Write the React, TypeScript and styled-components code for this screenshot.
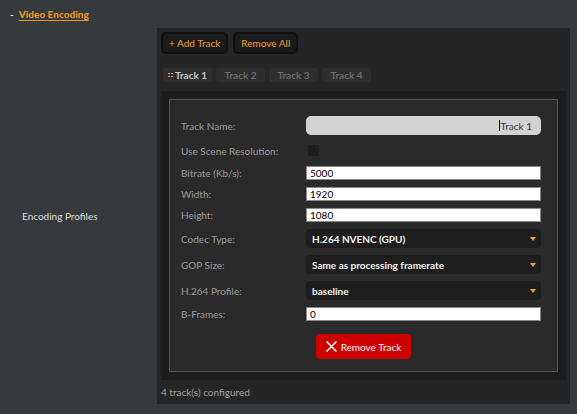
import React from 'react';
import styled, { createGlobalStyle } from 'styled-components';

const GlobalStyle = createGlobalStyle`
  body {
    margin: 0;
    background: #363a3d;
    font-family: Lato, "Open Sans", sans-serif;
    font-size: 10px;
  }
  * { box-sizing: border-box; }
`;

const Page = styled.div`
  width: 577px;
  height: 414px;
  padding-bottom: 10px;
`;

const SectionHeader = styled.div`
  height: 28px;
  display: flex;
  align-items: center;
  gap: 5px;
  padding-left: 10px;
`;

const Dash = styled.span`
  color: #e8e8e8;
  font-size: 10px;
  font-weight: 700;
`;

const SectionLink = styled.a`
  color: #e9952a;
  font-weight: 900;
  font-size: 10px;
  text-decoration: underline;
  text-underline-offset: 2px;
`;

const SettingRow = styled.div`
  display: grid;
  grid-template-columns: 157px 1fr;
  padding-right: 7px;
`;

const SettingLabel = styled.div`
  align-self: center;
  padding-left: 22px;
  color: #dedede;
`;

const Panel = styled.div`
  background: #252525;
  padding: 4px 4px 0;
`;

const Toolbar = styled.div`
  display: flex;
  gap: 5px;
`;

const ToolButton = styled.button`
  height: 22px;
  padding: 0 6px;
  background: #1b1b1b;
  border: 2px solid #111;
  border-radius: 5px;
  color: #f0a030;
  font-family: inherit;
  font-size: 10px;
`;

const TabBar = styled.div`
  display: flex;
  gap: 4px;
  margin-top: 14px;
  padding-left: 2px;
`;

const Tab = styled.div<{ $active?: boolean }>`
  width: 49px;
  height: 14px;
  display: flex;
  align-items: center;
  justify-content: center;
  gap: 2px;
  background: #2e2e2e;
  border-radius: 3px;
  font-weight: 700;
  color: ${p => (p.$active ? '#c8c8c8' : '#6b6b6b')};
`;

const Stage = styled.div`
  margin-top: 9px;
  background: #1c1c1c;
  padding: 8px;
`;

const Card = styled.div`
  border: 1px solid #555;
  background: #2a2a2a;
  padding: 16px 16px 12px 11px;
`;

const Form = styled.div`
  display: flex;
  flex-direction: column;
  gap: 7px;
`;

const Field = styled.div<{ $h: number }>`
  display: grid;
  grid-template-columns: 125px 1fr;
  align-items: center;
  height: ${p => p.$h}px;
  color: #9c9c9c;
`;

const NameInput = styled.div`
  height: 19px;
  background: #d3d3d3;
  border-radius: 5px;
  display: flex;
  align-items: center;
  justify-content: flex-end;
  padding-right: 9px;
  color: #333;
`;

const Caret = styled.span`
  width: 1px;
  height: 11px;
  background: #111;
`;

const CheckBox = styled.div`
  width: 11px;
  height: 11px;
  margin-left: 2px;
  background: #1e1e1e;
  border-radius: 2px;
`;

const TextInput = styled.div`
  height: 14px;
  background: #fff;
  border: 1px solid #8a8a8a;
  padding: 0 3px;
  color: #000;
  display: flex;
  align-items: center;
`;

const Select = styled.div`
  height: 19px;
  background: #1e1e1e;
  border-radius: 4px;
  display: flex;
  align-items: center;
  justify-content: space-between;
  padding: 0 5px 0 6px;
  color: #f2f2f2;
  font-weight: 700;
`;

const Arrow = styled.span`
  width: 0;
  height: 0;
  border-left: 3px solid transparent;
  border-right: 3px solid transparent;
  border-top: 4px solid #f0a030;
`;

const RemoveButton = styled.button`
  grid-column: 2;
  width: 95px;
  height: 25px;
  margin: 6px 0 0 10px;
  background: #cc0000;
  border: none;
  border-radius: 4px;
  color: #fff;
  font-family: inherit;
  font-size: 10px;
  display: flex;
  align-items: center;
  justify-content: center;
  gap: 4px;
`;

const ButtonRow = styled.div`
  display: grid;
  grid-template-columns: 125px 1fr;
`;

const Footer = styled.div`
  height: 24px;
  display: flex;
  align-items: center;
  color: #a3a3a3;
`;

const Grip = () => (
  <svg width="5" height="5" viewBox="0 0 5 5">
    <rect x="0" y="0" width="2" height="1" fill="#f0a030" />
    <rect x="3" y="0" width="2" height="1" fill="#f0a030" />
    <rect x="0" y="3" width="2" height="1" fill="#f0a030" />
    <rect x="3" y="3" width="2" height="1" fill="#f0a030" />
  </svg>
);

const CrossIcon = () => (
  <svg width="11" height="11" viewBox="0 0 11 11">
    <path d="M0.5 0.5 L10.5 10.5 M10.5 0.5 L0.5 10.5" stroke="#fff" strokeWidth="1.5" />
  </svg>
);

const textFields = [
  { label: 'Bitrate (Kb/s):', value: '5000' },
  { label: 'Width:', value: '1920' },
  { label: 'Height:', value: '1080' },
];

const selectFields = [
  { label: 'Codec Type:', value: 'H.264 NVENC (GPU)' },
  { label: 'GOP Size:', value: 'Same as processing framerate' },
  { label: 'H.264 Profile:', value: 'baseline' },
];

export default function App() {
  return (
    <Page>
      <GlobalStyle />
      <SectionHeader>
        <Dash>-</Dash>
        <SectionLink>Video Encoding</SectionLink>
      </SectionHeader>

      <SettingRow>
        <SettingLabel>Encoding Profiles</SettingLabel>
        <Panel>
          <Toolbar>
            <ToolButton>+ Add Track</ToolButton>
            <ToolButton>Remove All</ToolButton>
          </Toolbar>

          <TabBar>
            {[1, 2, 3, 4].map(n => (
              <Tab key={n} $active={n === 1}>
                {n === 1 && <Grip />}
                Track {n}
              </Tab>
            ))}
          </TabBar>

          <Stage>
            <Card>
              <Form>
                <Field $h={19}>
                  <span>Track Name:</span>
                  <NameInput>
                    <Caret />
                    Track 1
                  </NameInput>
                </Field>
                <Field $h={17}>
                  <span>Use Scene Resolution:</span>
                  <CheckBox />
                </Field>
                {textFields.map(f => (
                  <Field key={f.label} $h={14}>
                    <span>{f.label}</span>
                    <TextInput>{f.value}</TextInput>
                  </Field>
                ))}
                {selectFields.map(f => (
                  <Field key={f.label} $h={19}>
                    <span>{f.label}</span>
                    <Select>
                      {f.value}
                      <Arrow />
                    </Select>
                  </Field>
                ))}
                <Field $h={14}>
                  <span>B-Frames:</span>
                  <TextInput>0</TextInput>
                </Field>
                <ButtonRow>
                  <RemoveButton>
                    <CrossIcon />
                    Remove Track
                  </RemoveButton>
                </ButtonRow>
              </Form>
            </Card>
          </Stage>

          <Footer>4 track(s) configured</Footer>
        </Panel>
      </SettingRow>
    </Page>
  );
}
